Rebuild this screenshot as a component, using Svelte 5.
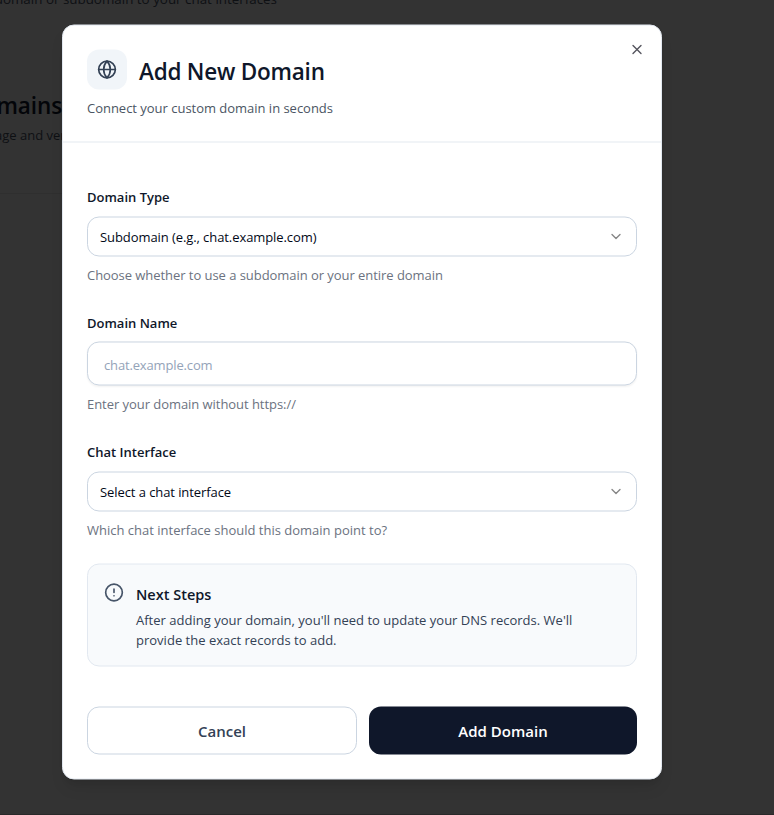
<script>
  let domainTypes = [
    { value: 'subdomain', label: 'Subdomain (e.g., chat.example.com)' }
  ];
  let type = $state(domainTypes[0]);
  let domain = $state('');
  let chat = $state(null);
</script>

{#snippet chevron()}
  <svg class="chevron" viewBox="0 0 24 24" width="16" height="16"><path d="m6 9 6 6 6-6" /></svg>
{/snippet}

<main>
  <div class="page">
    <p class="intro">domain or subdomain to your chat interfaces</p>
    <h2>mains</h2>
    <p class="sub">age and ver</p>
    <div class="panel"></div>
  </div>

  <div class="modal" role="dialog" aria-labelledby="title">
    <button class="close" aria-label="Close">
      <svg viewBox="0 0 24 24" width="16" height="16"><path d="M18 6 6 18M6 6l12 12" /></svg>
    </button>

    <header>
      <div class="heading">
        <div class="icon">
          <svg viewBox="0 0 24 24" width="20" height="20">
            <circle cx="12" cy="12" r="10" />
            <path d="M12 2a14.5 14.5 0 0 0 0 20 14.5 14.5 0 0 0 0-20M2 12h20" />
          </svg>
        </div>
        <h1 id="title">Add New Domain</h1>
      </div>
      <p class="lead">Connect your custom domain in seconds</p>
    </header>

    <form>
      <div class="field">
        <span class="label">Domain Type</span>
        <button type="button" class="select"><span>{type.label}</span>{@render chevron()}</button>
        <p class="help">Choose whether to use a subdomain or your entire domain</p>
      </div>
      <div class="field name">
        <label class="label" for="domain">Domain Name</label>
        <input id="domain" placeholder="chat.example.com" bind:value={domain} />
        <p class="help">Enter your domain without https://</p>
      </div>
      <div class="field">
        <span class="label">Chat Interface</span>
        <button type="button" class="select"><span>{chat ?? 'Select a chat interface'}</span>{@render chevron()}</button>
        <p class="help last">Which chat interface should this domain point to?</p>
      </div>

      <aside>
        <svg viewBox="0 0 24 24" width="20" height="20">
          <circle cx="12" cy="12" r="10" />
          <path d="M12 8v4M12 16h.01" />
        </svg>
        <div>
          <h3>Next Steps</h3>
          <p>After adding your domain, you'll need to update your DNS records. We'll<br />provide the exact records to add.</p>
        </div>
      </aside>

      <footer>
        <button type="button" class="cancel">Cancel</button>
        <button type="button" class="submit">Add Domain</button>
      </footer>
    </form>
  </div>
</main>

<style>
  :global(body) {
    background: #333333;
  }
  * {
    box-sizing: border-box;
  }
  main {
    position: relative;
    display: flow-root;
    height: 815px;
    overflow: hidden;
    border-bottom: 1px solid #292929;
    font-family: "Segoe UI", "Open Sans", "Noto Sans", sans-serif;
    font-size: 13px;
    line-height: 20px;
    color: #0f172a;
  }
  h1, h2, h3, p {
    margin: 0;
  }
  button, input {
    font: inherit;
    color: inherit;
  }
  svg {
    flex: none;
    fill: none;
    stroke: currentColor;
    stroke-width: 2;
    stroke-linecap: round;
    stroke-linejoin: round;
  }

  /* dimmed page behind the dialog */
  .page {
    position: absolute;
    top: -11px;
    left: 0;
    white-space: nowrap;
    color: #0e1013;
  }
  .intro {
    display: flex;
    justify-content: flex-end;
    width: 277px;
    font-size: 13.4px;
  }
  .page h2 {
    display: flex;
    justify-content: flex-end;
    width: 62px;
    margin-top: 81px;
    font-size: 22.5px;
    font-weight: 600;
    line-height: 32px;
    letter-spacing: -0.1px;
    color: #030509;
  }
  .page .sub {
    margin-top: 3px;
    margin-left: -5px;
  }
  .panel {
    width: 62px;
    margin-top: 48px;
    border-top: 1px solid #2f2f2f;
  }

  .modal {
    position: relative;
    width: 600px;
    height: 755px;
    margin: 25px 0 0 62px;
    border: 1px solid #e2e8f0;
    border-radius: 12px;
    background: #fff;
    box-shadow: 0 10px 15px -3px rgba(0, 0, 0, 0.1), 0 4px 6px -4px rgba(0, 0, 0, 0.1);
    transform: translateY(-0.5px);
  }
  .close {
    position: absolute;
    top: 16px;
    right: 16px;
    display: flex;
    padding: 0;
    border: 0;
    background: none;
    color: #52525b;
  }
  header {
    height: 117px;
    padding: 24px 24px 0;
    border-bottom: 1px solid #e4e9f0;
  }
  .heading {
    display: flex;
    gap: 12px;
  }
  .icon {
    display: grid;
    place-items: center;
    width: 40px;
    height: 40px;
    border-radius: 12px;
    background: #f1f5f9;
    color: #334155;
  }
  h1 {
    font-size: 22.5px;
    font-weight: 600;
    line-height: 44px;
    letter-spacing: -0.22px;
  }
  .lead {
    margin-top: 4px;
    letter-spacing: -0.02px;
    color: #4b5563;
  }

  form {
    padding: 44px 24px 24px;
  }
  .field {
    display: flex;
    flex-direction: column;
    margin-bottom: 28px;
  }
  .label {
    margin-bottom: 10px;
    font-weight: 600;
  }
  .name .label {
    margin-bottom: 9px;
  }
  .select {
    display: flex;
    align-items: center;
    justify-content: space-between;
    height: 40px;
    padding: 0 12px;
    border: 1px solid #cbd5e1;
    border-radius: 12px;
    background: #fff;
    letter-spacing: -0.08px;
    color: #020817;
  }
  .chevron {
    color: #858585;
  }
  input {
    height: 44px;
    padding: 2px 16px 0;
    border: 1px solid #cbd5e1;
    border-radius: 12px;
    background: #fff;
    box-shadow: 0 1px 2px rgba(0, 0, 0, 0.05);
    letter-spacing: -0.15px;
    outline: 0;
  }
  input::placeholder {
    color: #94a3b8;
  }
  .help {
    margin-top: 8px;
    letter-spacing: -0.05px;
    color: #6b7280;
  }
  .help.last {
    letter-spacing: 0;
  }

  aside {
    display: flex;
    gap: 12px;
    height: 103px;
    margin-top: -4px;
    padding: 18px 16px;
    border: 1px solid #e2e8f0;
    border-radius: 12px;
    background: #f8fafc;
    color: #334155;
  }
  aside svg {
    color: #475569;
  }
  aside h3 {
    margin: 2px 0 5px;
    font-size: 14.5px;
    font-weight: 600;
    line-height: 20px;
    color: #0f172a;
  }
  aside p {
    letter-spacing: 0.01px;
  }
  footer {
    display: flex;
    gap: 12px;
    margin-top: 40px;
  }
  footer button {
    height: 48px;
    border-radius: 12px;
    font-size: 15px;
    font-weight: 600;
  }
  .cancel {
    width: 270px;
    border: 1px solid #cbd5e1;
    background: #fff;
    color: #334155;
  }
  .submit {
    flex: 1;
    border: 0;
    background: #0f172a;
    color: #fff;
  }
</style>
